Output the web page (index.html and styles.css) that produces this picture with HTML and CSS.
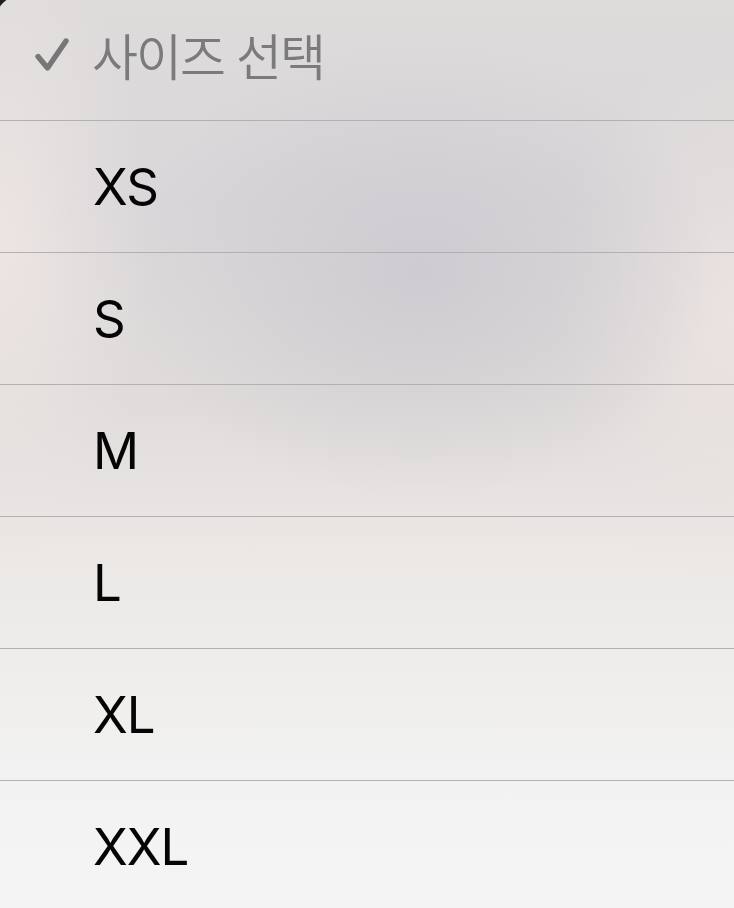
FILE: index.html
```html
<!DOCTYPE html>
<html lang="ko">
<head>
<meta charset="utf-8">
<title>사이즈 선택</title>
<link rel="stylesheet" href="styles.css">
</head>
<body>
<div class="menu">
  <div class="corner"></div>
  <div class="header">
    <svg class="check" width="40" height="40" viewBox="0 0 40 40" aria-hidden="true">
      <path d="M5 19.5 L14.5 31 L33 4" fill="none" stroke="#777777" stroke-width="5.4" stroke-linecap="round" stroke-linejoin="round"/>
    </svg>
    <span class="title">사이즈 선택</span>
  </div>
  <div class="item">XS</div>
  <div class="item">S</div>
  <div class="item">M</div>
  <div class="item">L</div>
  <div class="item">XL</div>
  <div class="item">XXL</div>
</div>
</body>
</html>
```
FILE: styles.css
```css
html, body {
  margin: 0;
  padding: 0;
  width: 734px;
  height: 908px;
  overflow: hidden;
  background: #1e1e1e;
}

.menu {
  position: relative;
  width: 734px;
  height: 908px;
  display: flex;
  flex-direction: column;
  overflow: hidden;
  background:
    radial-gradient(ellipse 300px 230px at 420px 270px, rgba(204,202,207,0.9), rgba(204,202,207,0) 100%),
    radial-gradient(ellipse 150px 320px at 0px 240px, rgba(238,230,228,0.95), rgba(238,230,228,0) 100%),
    radial-gradient(ellipse 180px 280px at 734px 320px, rgba(236,228,226,0.9), rgba(236,228,226,0) 100%),
    linear-gradient(to bottom, #dedbdb 0px, #d9d7d9 200px, #e0dcdb 400px, #ebe8e6 560px, #f0efee 700px, #f3f3f3 820px, #f4f4f4 908px);
  font-family: Inter, "Noto Sans", sans-serif;
}

.corner {
  position: absolute;
  left: 0;
  top: 0;
  width: 14px;
  height: 14px;
  background: radial-gradient(circle at 24px 24px, rgba(30,30,30,0) 29.2px, #1e1e1e 30.2px);
}

.header {
  height: 120px;
  flex: none;
  display: flex;
  align-items: center;
  box-sizing: border-box;
  padding: 0 0 12px 33px;
}

.check {
  flex: none;
  display: block;
  margin-top: 6px;
}

.title {
  margin-left: 19px;
  font-family: "Noto Sans CJK KR", sans-serif;
  font-weight: 350;
  font-size: 50px;
  letter-spacing: -2px;
  color: #7c7b7c;
  line-height: 1;
}

.item {
  height: 132px;
  flex: none;
  box-sizing: border-box;
  border-top: 1px solid #b2b0b0;
  display: flex;
  align-items: center;
  padding-left: 93px;
  font-size: 51px;
  letter-spacing: -1px;
  color: #050505;
  line-height: 1;
}
```
